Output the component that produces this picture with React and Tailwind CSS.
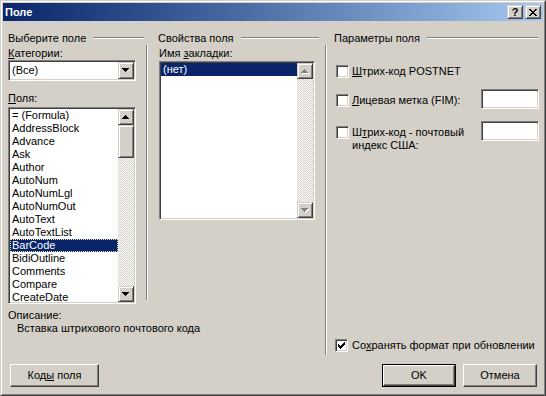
import React from "react";

const sunken =
  "border border-t-[#808080] border-l-[#808080] border-b-white border-r-white shadow-[inset_1px_1px_#404040,inset_-1px_-1px_#d4d0c8]";
const raisedBtn =
  "border border-t-white border-l-white border-b-[#404040] border-r-[#404040] shadow-[inset_-1px_-1px_#808080]";
const raisedSb =
  "border border-t-[#d4d0c8] border-l-[#d4d0c8] border-b-[#404040] border-r-[#404040] shadow-[inset_1px_1px_#ffffff,inset_-1px_-1px_#808080]";
const checker =
  "bg-[repeating-conic-gradient(#ffffff_0_25%,#d4d0c8_0_50%)] bg-[length:2px_2px]";

function Arrow({ dir = "down", disabled = false }) {
  const rows =
    dir === "up"
      ? [[3, 1], [2, 3], [1, 5], [0, 7]]
      : [[0, 7], [1, 5], [2, 3], [3, 1]];
  const shape = (fill, dx, dy, k) =>
    rows.map(([x, w], i) => (
      <rect key={k + i} x={x + dx} y={i + dy} width={w} height={1} fill={fill} />
    ));
  return (
    <svg width="8" height="5" shapeRendering="crispEdges" className="block">
      {disabled && shape("#ffffff", 1, 1, "s")}
      {shape(disabled ? "#808080" : "#000000", 0, 0, "f")}
    </svg>
  );
}

function CheckMark() {
  const rows = [
    [[6, 1]],
    [[5, 2]],
    [[0, 1], [4, 3]],
    [[0, 2], [3, 3]],
    [[0, 5]],
    [[1, 3]],
    [[2, 1]],
  ];
  return (
    <svg width="7" height="7" shapeRendering="crispEdges" className="block">
      {rows.map((r, y) =>
        r.map(([x, w], j) => (
          <rect key={`${y}-${j}`} x={x} y={y} width={w} height={1} fill="#000" />
        ))
      )}
    </svg>
  );
}

function CloseGlyph() {
  const rows = [
    [[0, 2], [6, 2]],
    [[1, 2], [5, 2]],
    [[2, 4]],
    [[3, 2]],
    [[2, 4]],
    [[1, 2], [5, 2]],
    [[0, 2], [6, 2]],
  ];
  return (
    <svg width="8" height="7" shapeRendering="crispEdges" className="block">
      {rows.map((r, y) =>
        r.map(([x, w], j) => (
          <rect key={`${y}-${j}`} x={x} y={y} width={w} height={1} fill="#000" />
        ))
      )}
    </svg>
  );
}

function Checkbox({ checked = false }) {
  return (
    <div
      className={`w-[13px] h-[13px] shrink-0 bg-white flex items-center justify-center ${sunken}`}
    >
      {checked && <CheckMark />}
    </div>
  );
}

function Header({ text, className = "", lineClass = "" }) {
  return (
    <div className={`h-[14px] flex items-center ${className}`}>
      <span className="leading-[14px] whitespace-nowrap">{text}</span>
      <div
        className={`flex-1 ml-[7px] h-[2px] border-t border-t-[#808080] border-b border-b-white ${lineClass}`}
      />
    </div>
  );
}

function SbButton({ dir, disabled, className = "" }) {
  return (
    <div
      className={`w-[16px] h-[16px] shrink-0 bg-[#d4d0c8] flex items-center justify-center ${raisedSb} ${className}`}
    >
      <Arrow dir={dir} disabled={disabled} />
    </div>
  );
}

function Button({ children, isDefault = false, className = "" }) {
  const inner = (
    <div
      className={`w-full h-full flex items-center justify-center bg-[#d4d0c8] ${raisedBtn}`}
    >
      {children}
    </div>
  );
  return isDefault ? (
    <div className={`h-[23px] border border-black ${className}`}>{inner}</div>
  ) : (
    <div className={`h-[23px] ${className}`}>{inner}</div>
  );
}

const fields = [
  "= (Formula)",
  "AddressBlock",
  "Advance",
  "Ask",
  "Author",
  "AutoNum",
  "AutoNumLgl",
  "AutoNumOut",
  "AutoText",
  "AutoTextList",
  "BarCode",
  "BidiOutline",
  "Comments",
  "Compare",
  "CreateDate",
];

export default function App() {
  return (
    <div className="w-[546px] h-[396px] bg-[#d4d0c8] text-black text-[11px] font-['Liberation_Sans',Arial,sans-serif] border border-t-[#d4d0c8] border-l-[#d4d0c8] border-b-[#404040] border-r-[#404040]">
      <div className="w-full h-full border border-t-white border-l-white border-b-[#808080] border-r-[#808080] p-[1px] flex flex-col">
        {/* Title bar */}
        <div className="h-[18px] shrink-0 flex items-center bg-linear-to-r from-[#0a246a] to-[#a6caf0]">
          <span className="ml-[2px] text-white font-bold text-[11px] leading-[18px]">
            Поле
          </span>
          <div className="ml-auto mr-[2px] flex gap-[2px]">
            <div
              className={`w-[16px] h-[14px] bg-[#d4d0c8] flex items-center justify-center ${raisedSb}`}
            >
              <span className="font-bold text-[11px] leading-[12px]">?</span>
            </div>
            <div
              className={`w-[16px] h-[14px] bg-[#d4d0c8] flex items-center justify-center ${raisedSb}`}
            >
              <CloseGlyph />
            </div>
          </div>
        </div>

        {/* Main area */}
        <div className="h-[335px] shrink-0 flex items-start">
          {/* Column A */}
          <div className="ml-[5px] w-[138px] shrink-0 flex flex-col">
            <Header text="Выберите поле" className="mt-[10px]" lineClass="mr-[2px]" />
            <div className="mt-[1px] h-[14px] leading-[14px]">
              <u>К</u>атегории:
            </div>
            <div className={`w-[128px] h-[21px] bg-white p-[1px] flex ${sunken}`}>
              <div className="flex-1 pl-[2px] leading-[17px]">(Все)</div>
              <div
                className={`w-[16px] h-[17px] bg-[#d4d0c8] flex items-center justify-center ${raisedSb}`}
              >
                <Arrow dir="down" />
              </div>
            </div>
            <div className="mt-[10px] h-[14px] leading-[14px]">
              <u>П</u>оля:
            </div>
            <div className={`mt-[2px] w-[128px] h-[197px] bg-white p-[1px] flex ${sunken}`}>
              <div className="flex-1 overflow-hidden">
                {fields.map((f) =>
                  f === "BarCode" ? (
                    <div
                      key={f}
                      className="h-[13px] leading-[13px] pl-[2px] bg-[#0a246a] text-white outline-1 outline-dotted outline-[#e8e8b0] -outline-offset-1 whitespace-nowrap"
                    >
                      {f}
                    </div>
                  ) : (
                    <div key={f} className="h-[13px] leading-[13px] pl-[2px] whitespace-nowrap">
                      {f}
                    </div>
                  )
                )}
              </div>
              <div className="w-[16px] h-full flex flex-col">
                <SbButton dir="up" />
                <div className={`w-[16px] h-[33px] shrink-0 bg-[#d4d0c8] ${raisedSb}`} />
                <div className={`flex-1 ${checker}`} />
                <SbButton dir="down" />
              </div>
            </div>
            <div className="mt-[4px] h-[14px] leading-[14px]">Описание:</div>
            <div className="pl-[9px] h-[13px] leading-[13px] whitespace-nowrap">
              Вставка штрихового почтового кода
            </div>
          </div>

          {/* Separator 1 */}
          <div className="mt-[24px] h-[255px] w-[2px] shrink-0 border-l border-l-[#808080] border-r border-r-white" />

          {/* Column B */}
          <div className="ml-[10px] w-[161px] shrink-0 flex flex-col">
            <Header text="Свойства поля" className="mt-[10px]" />
            <div className="mt-[1px] h-[14px] leading-[14px] pl-[1px]">
              Имя <u>з</u>акладки:
            </div>
            <div
              className={`mt-[1px] ml-[1px] w-[156px] h-[159px] bg-white p-[1px] flex ${sunken}`}
            >
              <div className="flex-1 overflow-hidden">
                <div className="h-[13px] leading-[13px] pl-[2px] bg-[#0a246a] text-white">
                  (нет)
                </div>
              </div>
              <div className="w-[16px] h-full flex flex-col">
                <SbButton dir="up" disabled />
                <div className={`flex-1 ${checker}`} />
                <SbButton dir="down" disabled />
              </div>
            </div>
          </div>

          {/* Separator 2 */}
          <div className="ml-[6px] mt-[24px] h-[310px] w-[2px] shrink-0 border-l border-l-[#808080] border-r border-r-white" />

          {/* Column C */}
          <div className="ml-[7px] w-[205px] h-full shrink-0 flex flex-col">
            <Header text="Параметры поля" className="mt-[10px]" lineClass="mr-[1px]" />
            <div className="mt-[20px] ml-[2px] h-[13px] flex items-center">
              <Checkbox />
              <span className="ml-[3px] leading-[13px] whitespace-nowrap">
                <u>Ш</u>трих-код POSTNET
              </span>
            </div>
            <div className="mt-[11px] flex items-start justify-between">
              <div className="mt-[5px] ml-[2px] flex items-start">
                <Checkbox />
                <span className="ml-[3px] leading-[13px] whitespace-nowrap">
                  <u>Л</u>ицевая метка (FIM):
                </span>
              </div>
              <div className={`w-[58px] h-[20px] bg-white ${sunken}`} />
            </div>
            <div className="mt-[12px] flex items-start justify-between">
              <div className="mt-[5px] ml-[2px] flex items-start">
                <Checkbox />
                <span className="ml-[3px] leading-[13px] whitespace-nowrap">
                  Ш<u>т</u>рих-код - почтовый
                  <br />
                  индекс США:
                </span>
              </div>
              <div className={`w-[58px] h-[20px] bg-white ${sunken}`} />
            </div>
            <div className="mt-auto mb-[4px] ml-[1px] h-[13px] flex items-center">
              <Checkbox checked />
              <span className="ml-[4px] leading-[13px] whitespace-nowrap">
                Со<u>х</u>ранять формат при обновлении
              </span>
            </div>
          </div>
        </div>

        {/* Buttons */}
        <div className="mt-[8px] flex">
          <Button className="ml-[7px] w-[89px]">
            <span>
              Код<u>ы</u> поля
            </span>
          </Button>
          <Button isDefault className="ml-[283px] w-[74px]">
            OK
          </Button>
          <Button className="ml-[7px] w-[74px]">Отмена</Button>
        </div>
      </div>
    </div>
  );
}
